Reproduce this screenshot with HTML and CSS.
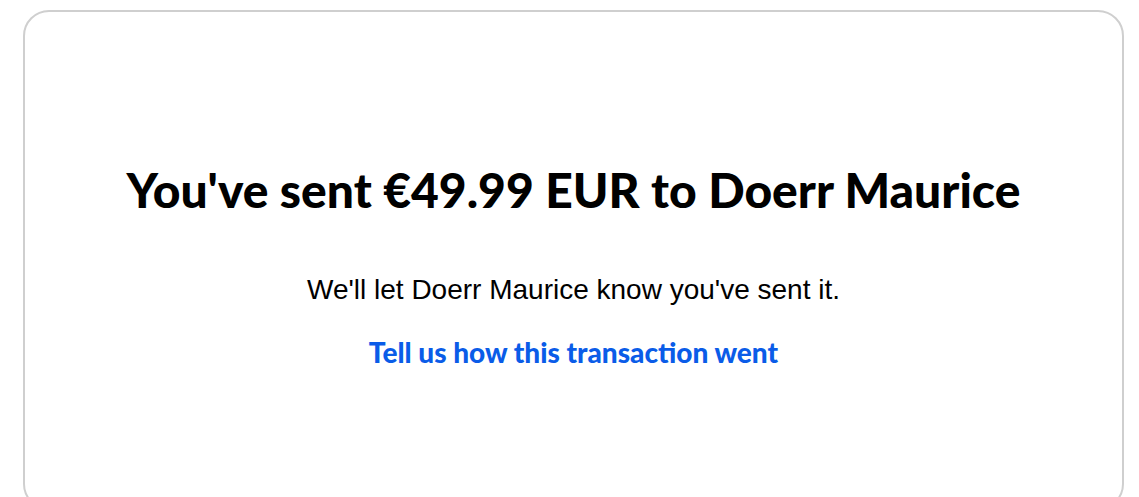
FILE: index.html
```html
<!DOCTYPE html>
<html lang="en">

<head>
    <meta charset="UTF-8">
    <meta name="viewport" content="width=device-width, initial-scale=1.0">
    <title>Payment sent</title>
    <link rel="stylesheet" href="styles.css">
</head>

<body>

    <div class="card">
        <h1 class="title">You've sent €49.99 EUR to Doerr Maurice</h1>
        <p class="note">We'll let Doerr Maurice know you've sent it.</p>
        <a class="feedback" href="#">Tell us how this transaction went</a>
    </div>

</body>

</html>
```

FILE: styles.css
```css
body {
    margin: 0;
    background: #fff;
    font-family: 'Liberation Sans', Arial, sans-serif;
    color: #000;
}

.card {
    box-sizing: border-box;
    width: 1101px;
    height: 500px;
    margin: 10px 0 0 23px;
    border: 2px solid #cfcfcf;
    border-radius: 26px;
    display: flex;
    flex-direction: column;
    align-items: center;
    padding-top: 146px;
}

.title {
    margin: 0;
    font-family: 'Lato', sans-serif;
    font-weight: 900;
    font-size: 48px;
    line-height: 64px;
}

.note {
    margin: 52px 0 0;
    font-size: 28px;
    line-height: 32px;
}

.feedback {
    margin-top: 30px;
    font-family: 'Lato', sans-serif;
    font-weight: 900;
    font-size: 28px;
    line-height: 32px;
    color: #0a5ce8;
    text-decoration: none;
}
```
